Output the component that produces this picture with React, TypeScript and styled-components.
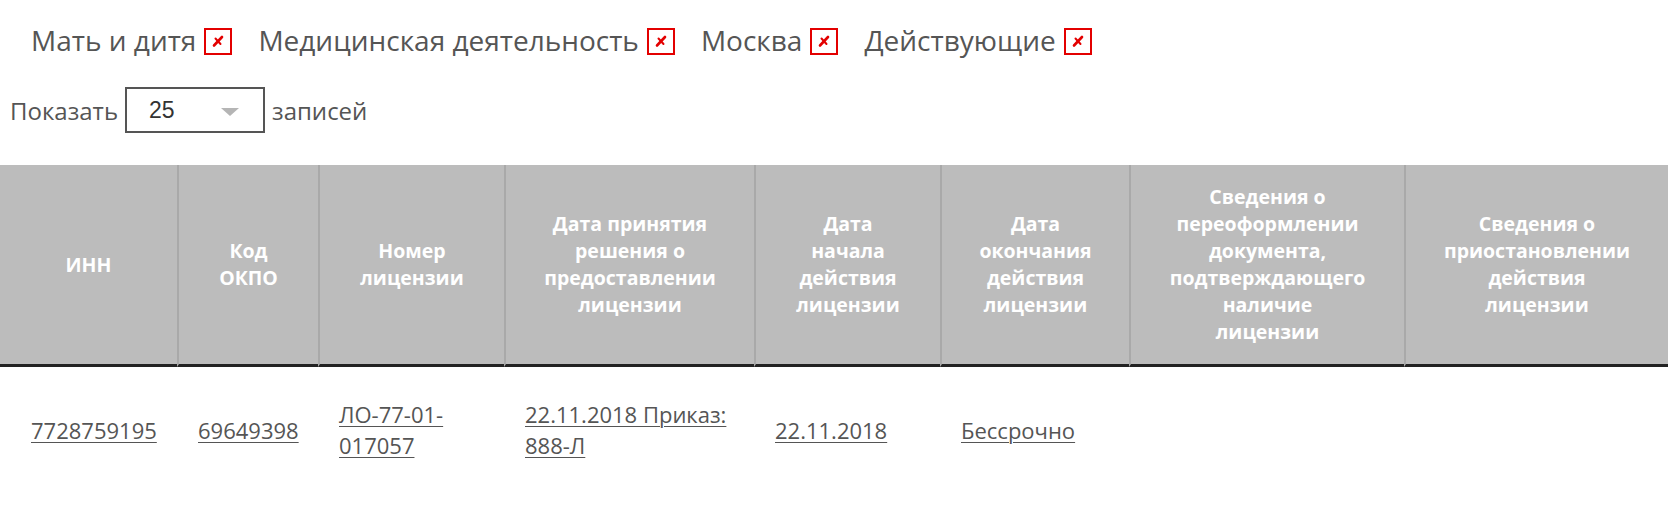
import React from "react";
import styled, { createGlobalStyle } from "styled-components";

const GlobalStyle = createGlobalStyle`
  html, body { margin: 0; padding: 0; background: #fff; }
  body { font-family: "Open Sans", "Noto Sans", sans-serif; color: #555; }
`;

const Page = styled.div`
  width: 1668px;
`;

const Filters = styled.div`
  display: flex;
  align-items: center;
  gap: 26px;
  padding: 21px 0 0 31px;
`;

const FilterTag = styled.span`
  display: inline-flex;
  align-items: center;
  gap: 8px;
  font-size: 28px;
  line-height: 38px;
  color: #555;
`;

const RemoveBox = styled.span`
  width: 28px;
  height: 27px;
  box-sizing: border-box;
  border: 2px solid #e30000;
  display: inline-flex;
  align-items: center;
  justify-content: center;
  margin-top: 2px;
`;

const LengthRow = styled.div`
  display: flex;
  align-items: center;
  gap: 7px;
  padding: 0 0 0 10px;
  margin-top: 28px;
  font-size: 24px;
  color: #555;
`;

const SelectBox = styled.div`
  width: 140px;
  height: 46px;
  box-sizing: border-box;
  border: 2px solid #555;
  display: flex;
  align-items: center;
  justify-content: space-between;
  padding: 0 24px 0 22px;
  font-family: "Liberation Sans", Arial, sans-serif;
  font-size: 23px;
  color: #333;
`;

const Caret = styled.span`
  width: 0;
  height: 0;
  border-left: 9px solid transparent;
  border-right: 9px solid transparent;
  border-top: 8px solid #b5b5b5;
  margin-top: 3px;
`;

const Table = styled.table`
  width: 1668px;
  margin-top: 32px;
  border-collapse: separate;
  border-spacing: 0;
  table-layout: fixed;
`;

const HeadCell = styled.th<{ $first?: boolean }>`
  background: #bcbcbc;
  color: #fff;
  font-weight: 700;
  font-size: 19.5px;
  line-height: 27px;
  padding: 18px 4px 19px;
  text-align: center;
  vertical-align: middle;
  white-space: nowrap;
  border-bottom: 3px solid #222;
  border-left: ${(p) => (p.$first ? "none" : "2px solid #a9a9a9")};
`;

const BodyCell = styled.td<{ $first?: boolean }>`
  font-size: 22px;
  line-height: 31px;
  padding: 32px 12px 33px ${(p) => (p.$first ? "31px" : "21px")};
  text-align: left;
  vertical-align: middle;
  color: #555;
`;

const CellLink = styled.a`
  color: #555;
  text-decoration: underline;
  text-underline-offset: 3px;
  text-decoration-thickness: 1px;
`;

const XIcon = () => (
  <svg width="16" height="16" viewBox="0 0 16 16">
    <path d="M4 12.5 L12 4" stroke="#e30000" strokeWidth="2.6" strokeLinecap="round" />
    <path d="M5.5 5.5 L10.5 11" stroke="#e30000" strokeWidth="2" strokeLinecap="round" />
  </svg>
);

const filters = ["Мать и дитя", "Медицинская деятельность", "Москва", "Действующие"];

const columns: { width: number; lines: string[] }[] = [
  { width: 177, lines: ["ИНН"] },
  { width: 141, lines: ["Код", "ОКПО"] },
  { width: 186, lines: ["Номер", "лицензии"] },
  { width: 250, lines: ["Дата принятия", "решения о", "предоставлении", "лицензии"] },
  { width: 186, lines: ["Дата", "начала", "действия", "лицензии"] },
  { width: 189, lines: ["Дата", "окончания", "действия", "лицензии"] },
  {
    width: 275,
    lines: ["Сведения о", "переоформлении", "документа,", "подтверждающего", "наличие", "лицензии"],
  },
  { width: 264, lines: ["Сведения о", "приостановлении", "действия", "лицензии"] },
];

const row = [
  "7728759195",
  "69649398",
  "ЛО-77-01-017057",
  "22.11.2018 Приказ: 888-Л",
  "22.11.2018",
  "Бессрочно",
  "",
  "",
];

export default function App() {
  return (
    <Page>
      <GlobalStyle />
      <Filters>
        {filters.map((f) => (
          <FilterTag key={f}>
            {f}
            <RemoveBox>
              <XIcon />
            </RemoveBox>
          </FilterTag>
        ))}
      </Filters>
      <LengthRow>
        Показать
        <SelectBox>
          <span>25</span>
          <Caret />
        </SelectBox>
        записей
      </LengthRow>
      <Table>
        <colgroup>
          {columns.map((c, i) => (
            <col key={i} style={{ width: c.width }} />
          ))}
        </colgroup>
        <thead>
          <tr>
            {columns.map((c, i) => (
              <HeadCell key={i} $first={i === 0}>
                {c.lines.map((l, j) => (
                  <React.Fragment key={j}>
                    {j > 0 && <br />}
                    {l}
                  </React.Fragment>
                ))}
              </HeadCell>
            ))}
          </tr>
        </thead>
        <tbody>
          <tr>
            {row.map((v, i) => (
              <BodyCell key={i} $first={i === 0}>
                {v && <CellLink href="#">{v}</CellLink>}
              </BodyCell>
            ))}
          </tr>
        </tbody>
      </Table>
    </Page>
  );
}
